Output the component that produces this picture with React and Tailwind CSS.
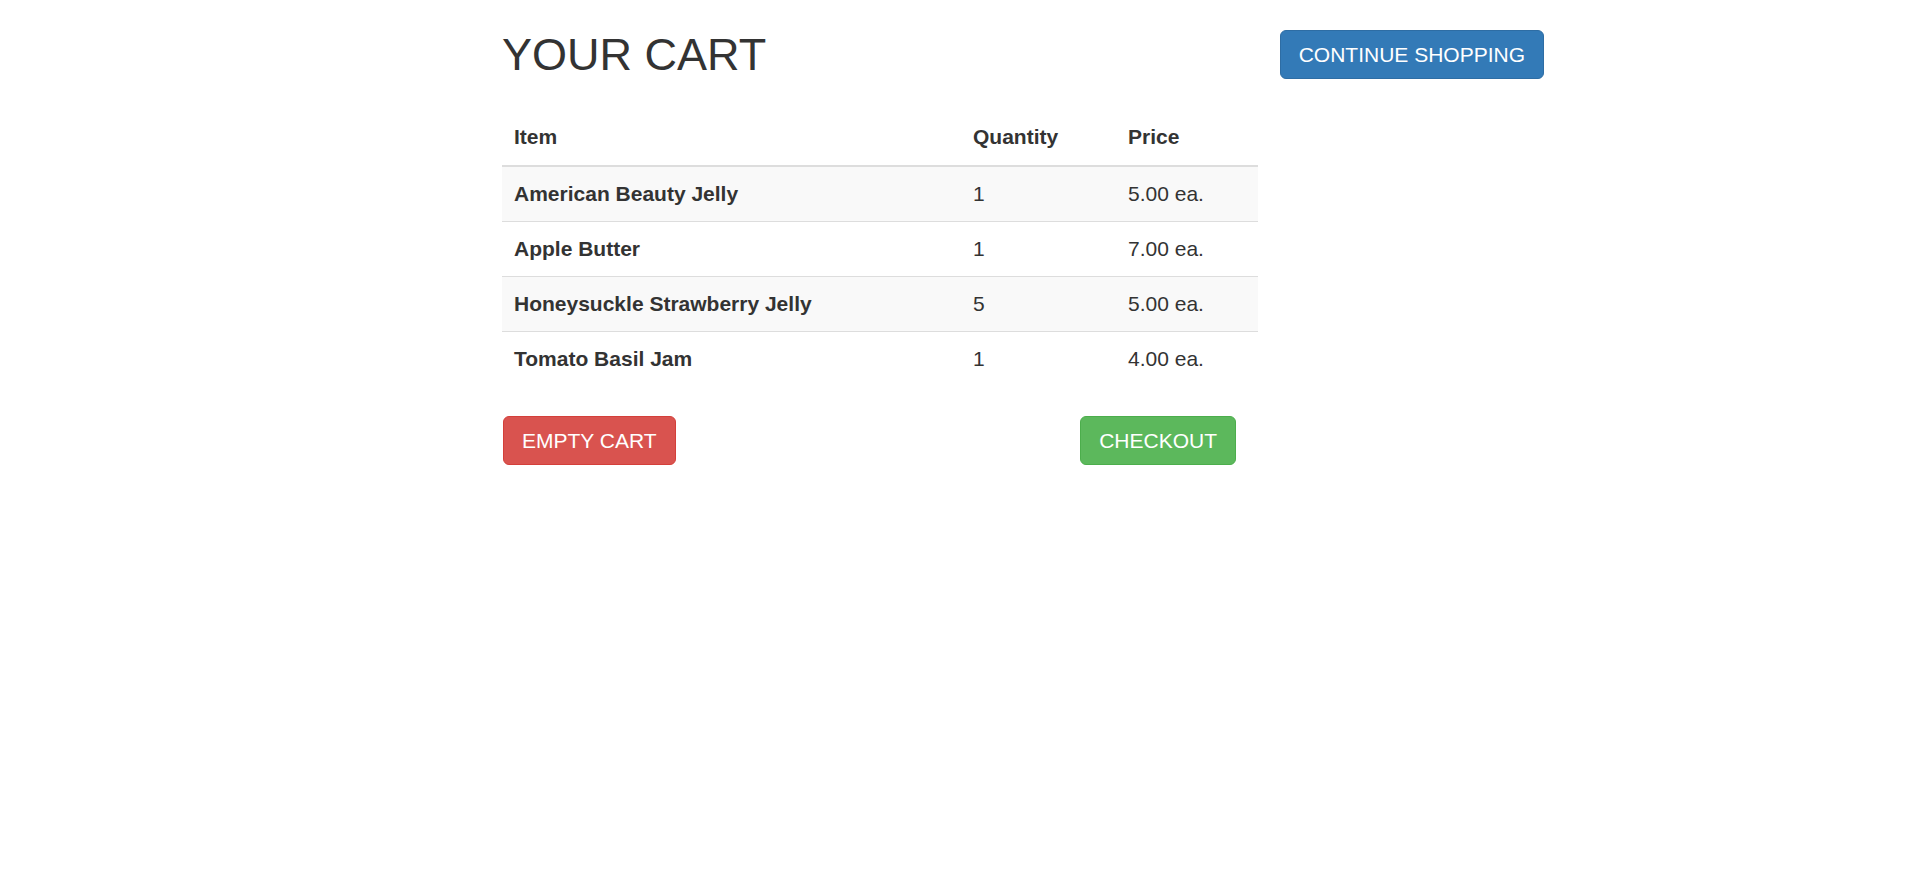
import React from 'react';

const items = [
    { name: 'American Beauty Jelly', qty: 1, price: '5.00' },
    { name: 'Apple Butter', qty: 1, price: '7.00' },
    { name: 'Honeysuckle Strawberry Jelly', qty: 5, price: '5.00' },
    { name: 'Tomato Basil Jam', qty: 1, price: '4.00' },
];

const btn = 'rounded-[6px] border px-[18px] py-[10px] text-[21px] leading-[27px] text-white';

const App = () => {
    return (
        <div className="min-h-screen bg-white text-[#333] font-['Liberation_Sans',Arial,sans-serif]">
            <div className="ml-[502px] w-[1042px] pt-[30px]">
                {/* Header row */}
                <div className="flex items-center justify-between">
                    <h1 className="text-[45px] leading-none font-normal">YOUR CART</h1>
                    <button className={`${btn} bg-[#337ab7] border-[#2e6da4]`}>CONTINUE SHOPPING</button>
                </div>

                {/* Cart table */}
                <table className="mt-[32px] w-[756px] border-collapse text-[21px] leading-[30px]">
                    <thead>
                        <tr>
                            <th className="w-[459px] border-b-2 border-[#ddd] px-3 pt-[11px] pb-[13px] text-left font-bold">Item</th>
                            <th className="w-[155px] border-b-2 border-[#ddd] px-3 pt-[11px] pb-[13px] text-left font-bold">Quantity</th>
                            <th className="border-b-2 border-[#ddd] px-3 pt-[11px] pb-[13px] text-left font-bold">Price</th>
                        </tr>
                    </thead>
                    <tbody>
                        {items.map((item, i) => (
                            <tr key={item.name} className={i % 2 === 0 ? 'bg-[#f9f9f9]' : ''}>
                                <td className="border-t border-[#ddd] px-3 py-3 font-bold">{item.name}</td>
                                <td className="border-t border-[#ddd] px-3 py-3">{item.qty}</td>
                                <td className="border-t border-[#ddd] px-3 py-3">{item.price} ea.</td>
                            </tr>
                        ))}
                    </tbody>
                </table>

                {/* Actions */}
                <div className="mt-[30px] flex w-[734px] justify-between pl-px">
                    <button className={`${btn} bg-[#d9534f] border-[#d43f3a]`}>EMPTY CART</button>
                    <button className={`${btn} bg-[#5cb85c] border-[#4cae4c]`}>CHECKOUT</button>
                </div>
            </div>
        </div>
    );
};

export default App;
